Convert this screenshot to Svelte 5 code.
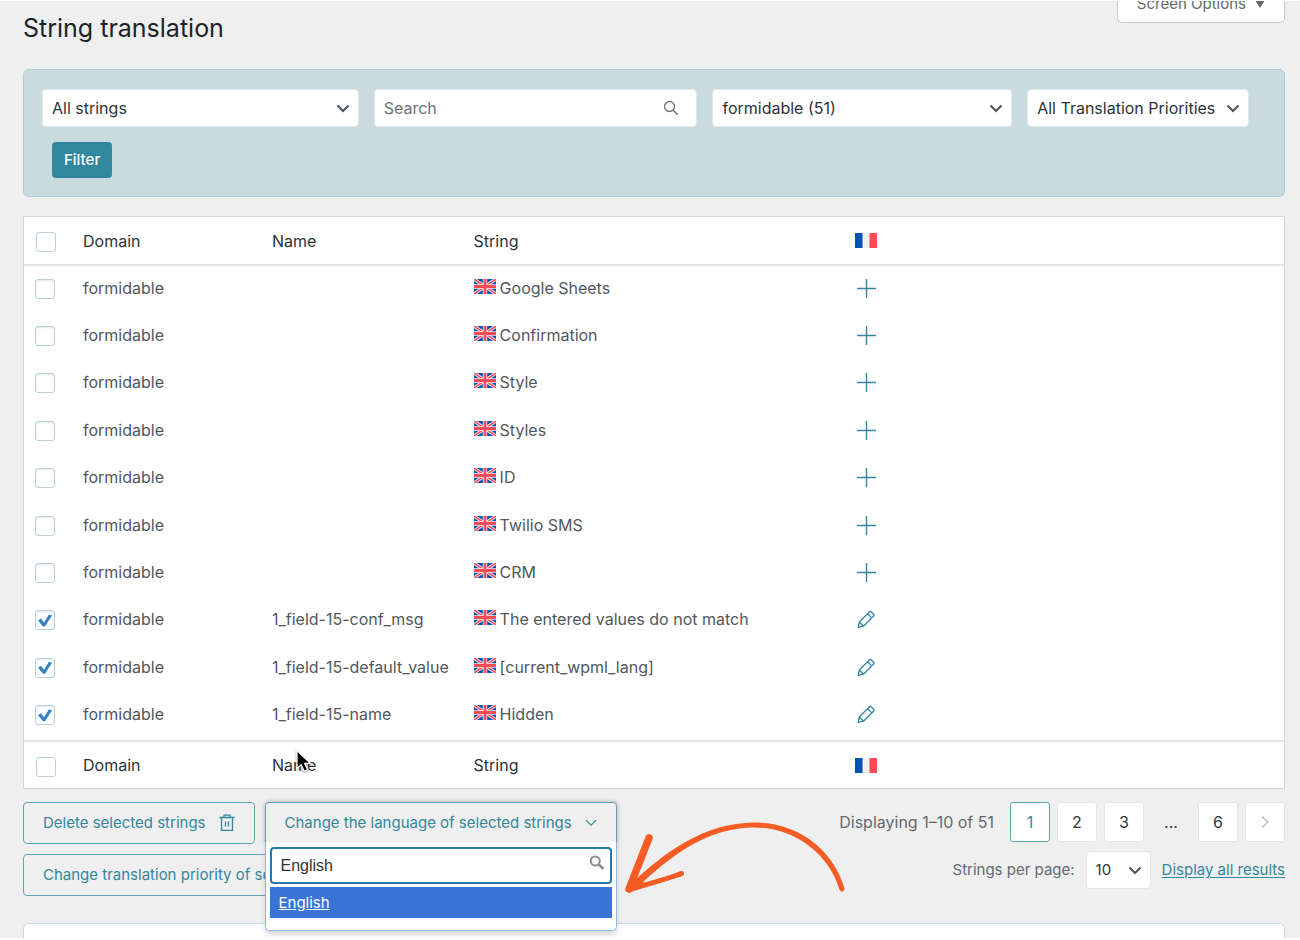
<script>
  let rows = $state([
    { name: '', text: 'Google Sheets', checked: false },
    { name: '', text: 'Confirmation', checked: false },
    { name: '', text: 'Style', checked: false },
    { name: '', text: 'Styles', checked: false },
    { name: '', text: 'ID', checked: false },
    { name: '', text: 'Twilio SMS', checked: false },
    { name: '', text: 'CRM', checked: false },
    { name: '1_field-15-conf_msg', text: 'The entered values do not match', checked: true },
    { name: '1_field-15-default_value', text: '[current_wpml_lang]', checked: true },
    { name: '1_field-15-name', text: 'Hidden', checked: true }
  ]);
  let query = $state('English');
</script>

{#snippet chevron()}
  <svg class="chevron" viewBox="0 0 14 9" width="14" height="9" aria-hidden="true">
    <path d="M1.5 1.5 7 7l5.500-5.500" fill="none" stroke="#50575e" stroke-width="2.200" />
  </svg>
{/snippet}

{#snippet ukFlag()}
  <svg class="uk" viewBox="0 0 22 15" width="22" height="15" aria-hidden="true">
    <rect width="22" height="15" fill="#0052b4" />
    <path d="M0 0 22 15M22 0 0 15" stroke="#f0f0f0" stroke-width="3.200" />
    <path d="M0 0 22 15M22 0 0 15" stroke="#ff4b55" stroke-width="1.500" />
    <path d="M11 0v15M0 7.500h22" stroke="#f0f0f0" stroke-width="4.400" />
    <path d="M11 0v15M0 7.500h22" stroke="#ff4b55" stroke-width="2.800" />
  </svg>
{/snippet}

{#snippet frFlag()}
  <svg class="fr" viewBox="0 0 22 15" width="22" height="15" role="img" aria-label="French">
    <rect width="22" height="15" fill="#f0f0f0" />
    <rect width="7.500" height="15" fill="#0052b4" />
    <rect x="14.500" width="7.500" height="15" fill="#ff4b55" />
  </svg>
{/snippet}

{#snippet headings(cursor)}
  <tr>
    <th><input type="checkbox" aria-label="Select all" /></th>
    <th>Domain</th>
    <th>
      <span class="anchor">Name
        {#if cursor}
          <svg class="cursor" viewBox="0 0 18 25" width="18" height="25" aria-hidden="true">
            <path d="M2 1.500v18l4.200-3.800 3 6.600 3.400-1.500-2.900-6.500h5.600z" fill="#000" stroke="#fff" stroke-width="1.200" />
          </svg>
        {/if}
      </span>
    </th>
    <th>String</th>
    <th>{@render frFlag()}</th>
  </tr>
{/snippet}

<main>
  <header>
    <h1>String translation</h1>
    <button class="screen">Screen Options <span class="tri"></span></button>
  </header>

  <form class="filters" onsubmit={(e) => e.preventDefault()}>
    <div class="fields">
      <div class="field">
        <select aria-label="Status"><option>All strings</option></select>
        {@render chevron()}
      </div>
      <div class="field">
        <input type="text" placeholder="Search" aria-label="Search" />
        <svg class="lens" viewBox="0 0 16 16" width="16" height="16" aria-hidden="true">
          <circle cx="6.500" cy="6.500" r="5" fill="none" stroke="#6c7278" stroke-width="1.300" />
          <path d="m10 10 4.700 4.700" stroke="#6c7278" stroke-width="1.600" />
        </svg>
      </div>
      <div class="field">
        <select aria-label="Domain"><option>formidable (51)</option></select>
        {@render chevron()}
      </div>
      <div class="field">
        <select aria-label="Priority"><option>All Translation Priorities</option></select>
        {@render chevron()}
      </div>
    </div>
    <button class="filter">Filter</button>
  </form>

  <table>
    <colgroup>
      <col class="c-check" /><col class="c-domain" /><col class="c-name" /><col class="c-string" /><col />
    </colgroup>
    <thead>{@render headings(false)}</thead>
    <tbody>
      {#each rows as row}
        <tr>
          <td><input type="checkbox" bind:checked={row.checked} aria-label={row.text} /></td>
          <td>formidable</td>
          <td>{row.name}</td>
          <td>{@render ukFlag()}{row.text}</td>
          <td>
            {#if row.name}
              <button class="act" aria-label="Edit translation">
                <svg viewBox="0 0 22 22" width="22" height="22" fill="none" stroke="#33879e" stroke-width="1.300" stroke-linejoin="round">
                  <path d="M3.200 19.300 4.300 14 14.500 3.800a1.200 1.200 0 0 1 1.700 0l2.500 2.500a1.200 1.200 0 0 1 0 1.700L8.500 18.200zM4.300 14l4.200 4.200M12.600 5.700l4.200 4.200" />
                </svg>
              </button>
            {:else}
              <button class="act" aria-label="Add translation">
                <svg viewBox="0 0 22 22" width="22" height="22">
                  <path d="M11.500 2v19M2 11.500h19" stroke="#33879e" stroke-width="1.400" />
                </svg>
              </button>
            {/if}
          </td>
        </tr>
      {/each}
    </tbody>
    <tfoot>{@render headings(true)}</tfoot>
  </table>

  <section class="below">
    <div class="actions">
      <div class="line">
        <button class="outline">
          Delete selected strings
          <svg viewBox="0 0 16 18" width="16" height="18" fill="none" stroke="#33879e" stroke-width="1.300" aria-hidden="true">
            <path d="M.500 3.500h15M5 3.500V1.200h6v2.300M2.500 3.500v12.800h11V3.500M6.500 7.500v5M9.500 7.500v5" />
          </svg>
        </button>
        <div class="language">
          <button class="outline open">
            Change the language of selected strings
            <svg viewBox="0 0 12 8" width="12" height="8" aria-hidden="true">
              <path d="m1 1.200 5 5 5-5" fill="none" stroke="#33879e" stroke-width="1.200" />
            </svg>
          </button>
          <div class="menu">
            <div class="query">
              <input type="text" bind:value={query} aria-label="Language" />
              <svg viewBox="0 0 16 16" width="16" height="16" aria-hidden="true">
                <circle cx="6.300" cy="6" r="4.500" fill="none" stroke="#8c8f94" stroke-width="2" />
                <path d="m9.500 9.200 5 4.800" stroke="#8c8f94" stroke-width="2.600" />
              </svg>
            </div>
            <button class="choice">English</button>
          </div>
          <svg class="arrow" viewBox="0 0 224 76" width="224" height="76" aria-hidden="true">
            <g fill="none" stroke="#f65c23" stroke-linecap="round" stroke-linejoin="round">
              <path d="M26 18 6 69" stroke-width="7.500" />
              <path d="M6 69q28-7 51.500-15" stroke-width="4.500" />
            </g>
            <path fill="#f65c23" d="M5 66.500C44 30 82 3 131 2.500c46 0 80 29 90.500 66a2.600 2.600 0 0 1-5 1.300C206 34 172 7.500 131 7.500 86 8 53 32 20 62l2 3 36-14a2.500 2.500 0 0 1 1 5L6 72.500z" />
          </svg>
        </div>
      </div>
      <button class="outline priority">Change translation priority of selected strings</button>
    </div>

    <div class="paging">
      <nav class="pages" aria-label="Pages">
        <span class="note">Displaying 1–10 of 51</span>
        <button class="page current">1</button>
        <button class="page">2</button>
        <button class="page">3</button>
        <span class="dots">...</span>
        <button class="page">6</button>
        <button class="page" aria-label="Next page">
          <svg viewBox="0 0 8 14" width="8" height="14" aria-hidden="true">
            <path d="m1 1.500 6 5.500-6 5.500" fill="none" stroke="#b4b9be" stroke-width="1.300" />
          </svg>
        </button>
      </nav>
      <div class="per">
        <label for="per-page">Strings per page:</label>
        <div class="field">
          <select id="per-page"><option>10</option></select>
          {@render chevron()}
        </div>
        <a href="#all">Display all results</a>
      </div>
    </div>
  </section>

  <div class="next-panel"></div>
</main>

<style>
  :global(body) {
    background: #fff;
    font-family: Inter, 'Liberation Sans', sans-serif;
    font-size: 16px;
  }
  * {
    box-sizing: border-box;
  }
  main {
    padding: 0 15px 0 23px;
    border-top: 1px solid #fff;
    background: #efefef;
    color: #2c3338;
    line-height: 24px;
    overflow: clip;
  }
  button,
  input,
  select {
    margin: 0;
    font: inherit;
    color: inherit;
  }
  svg {
    flex: none;
  }
  header {
    display: flex;
    justify-content: space-between;
    align-items: flex-start;
  }
  h1 {
    margin: 10px 0 24px;
    font-size: 25px;
    line-height: 34px;
    font-weight: 400;
    color: #1d2327;
  }
  .screen {
    display: flex;
    align-items: center;
    gap: 9px;
    height: 38px;
    margin-top: -16px;
    padding: 0 19px;
    border: 1px solid #c9cacd;
    border-radius: 5px;
    background: #fff;
    color: #646970;
    font-size: 15px;
  }
  .tri {
    border: 5px solid transparent;
    border-top: 8px solid #646970;
    border-bottom: 0;
  }
  .filters {
    padding: 19px 35px 18px 18px;
    border: 1px solid #abcdd8;
    border-radius: 6px;
    background: #cadbe0;
  }
  .fields {
    display: grid;
    grid-template-columns: 317fr 324fr 300fr 222fr;
    gap: 15px;
  }
  .field {
    position: relative;
    height: 38px;
  }
  .field select,
  .field input {
    appearance: none;
    width: 100%;
    height: 38px;
    padding: 0 9px;
    border: 1px solid #e3e7e9;
    border-radius: 4px;
    background: #fff;
    outline: 0;
  }
  .field input::placeholder {
    color: #6c7278;
    opacity: 1;
  }
  .chevron,
  .lens {
    position: absolute;
    right: 9px;
    top: 15px;
    pointer-events: none;
  }
  .lens {
    right: 18px;
    top: 11px;
  }
  .filter {
    display: block;
    height: 36px;
    margin: 15px 0 0 10px;
    padding: 0 12px;
    border: 0;
    border-radius: 4px;
    background: #33879e;
    color: #fff;
    font-size: 15px;
    font-weight: 500;
  }

  table {
    width: 100%;
    height: 573px;
    margin-top: 19px;
    border: 1px solid #d5d6d8;
    border-collapse: separate;
    border-spacing: 0;
    table-layout: fixed;
    background: #fff;
  }
  .c-check {
    width: 59px;
  }
  .c-domain {
    width: 15%;
  }
  .c-name {
    width: 16%;
  }
  .c-string {
    width: 30%;
  }
  th,
  td {
    padding: 0;
    text-align: left;
    font-weight: 400;
    white-space: nowrap;
  }
  th {
    height: 48px;
  }
  thead th {
    height: 49px;
    border-bottom: 2px solid #e4e5e6;
  }
  tfoot th {
    border-top: 2px solid #e4e5e6;
  }
  td {
    padding-bottom: 4px;
    color: #50575e;
  }
  th:first-child,
  td:first-child {
    padding: 3px 0 0 12px;
  }
  td:first-child {
    padding: 0 0 2px 11px;
  }
  input[type='checkbox'] {
    appearance: none;
    display: block;
    width: 20px;
    height: 20px;
    border: 1px solid #b3d2dc;
    border-radius: 3px;
    background: #fff;
  }
  td input[type='checkbox'] {
    box-shadow: inset 0 1px 2px #0000001a;
  }
  input[type='checkbox']:checked::before {
    content: '';
    display: block;
    width: 18px;
    height: 18px;
    background: #3582c4;
    clip-path: polygon(2px 9px, 5px 7px, 8px 11px, 13px 3px, 16px 4px, 9px 15px, 7px 15px);
  }
  .uk {
    margin-right: 4px;
  }
  .fr {
    display: block;
    margin-left: 3px;
  }
  .anchor {
    position: relative;
  }
  .cursor {
    position: absolute;
    left: 23px;
    top: -6px;
    filter: drop-shadow(0 1px 1px #0006);
  }
  .act {
    display: block;
    margin-left: 3px;
    padding: 0;
    border: 0;
    background: none;
  }
  .act svg {
    display: block;
  }

  .below {
    display: flex;
    justify-content: space-between;
    margin-top: 13px;
  }
  .actions {
    display: flex;
    flex-direction: column;
    align-items: flex-start;
    gap: 10px;
  }
  .line {
    display: flex;
    gap: 10px;
  }
  .outline {
    display: flex;
    align-items: center;
    gap: 13px;
    height: 42px;
    padding: 0 19px;
    border: 1px solid #5fa3b4;
    border-radius: 4px;
    background: #efefef;
    color: #33879e;
    font-size: 15px;
    white-space: nowrap;
  }
  .priority {
    width: 500px;
  }
  .language {
    position: relative;
  }
  .open {
    border-radius: 4px 4px 0 0;
    box-shadow: 0 0 5px #0000004d;
  }
  .menu {
    position: absolute;
    z-index: 1;
    left: 0;
    right: 0;
    top: 40px;
    padding: 5px 4px 12px;
    border: 1px solid #8fb7ee;
    border-top: 0;
    border-radius: 0 0 5px 5px;
    background: #fff;
    box-shadow: 0 4px 5px #00000026;
  }
  .query {
    position: relative;
  }
  .query input {
    display: block;
    width: 100%;
    height: 37px;
    padding: 0 9px;
    border: 2px solid #2578a8;
    border-radius: 4px;
    background: #fff;
    font-family: 'Liberation Sans', sans-serif;
    outline: 0;
  }
  .query svg {
    position: absolute;
    right: 7px;
    top: 8px;
  }
  .choice {
    display: block;
    width: 100%;
    height: 31px;
    margin-top: 3px;
    padding: 0 9px;
    border: 0;
    background: #3875d7;
    color: #fff;
    font-size: 15px;
    text-align: left;
    text-decoration: underline;
  }
  .arrow {
    position: absolute;
    left: calc(100% + 6px);
    top: 18px;
  }

  .paging {
    display: flex;
    flex-direction: column;
    align-items: flex-end;
    gap: 9px;
  }
  .pages {
    display: flex;
    align-items: center;
    gap: 7px;
  }
  .note {
    margin-right: 9px;
    color: #646970;
  }
  .page {
    display: grid;
    place-items: center;
    width: 40px;
    height: 40px;
    padding: 0;
    border: 1px solid #e4e5e6;
    border-radius: 3px;
    background: #fff;
  }
  .current {
    border-color: #5fa3b4;
    color: #33879e;
  }
  .dots {
    width: 40px;
    text-align: center;
  }
  .per {
    display: flex;
    align-items: center;
    gap: 11px;
    color: #646970;
    font-size: 15px;
  }
  .per .field {
    width: 65px;
    color: #2c3338;
  }
  a {
    color: #33879e;
    text-underline-offset: 2px;
  }
  .next-panel {
    height: 15px;
    margin-top: 27px;
    border: 1px solid #c5dde3;
    border-bottom: 0;
    border-radius: 6px 6px 0 0;
    background: #fff;
  }
</style>
